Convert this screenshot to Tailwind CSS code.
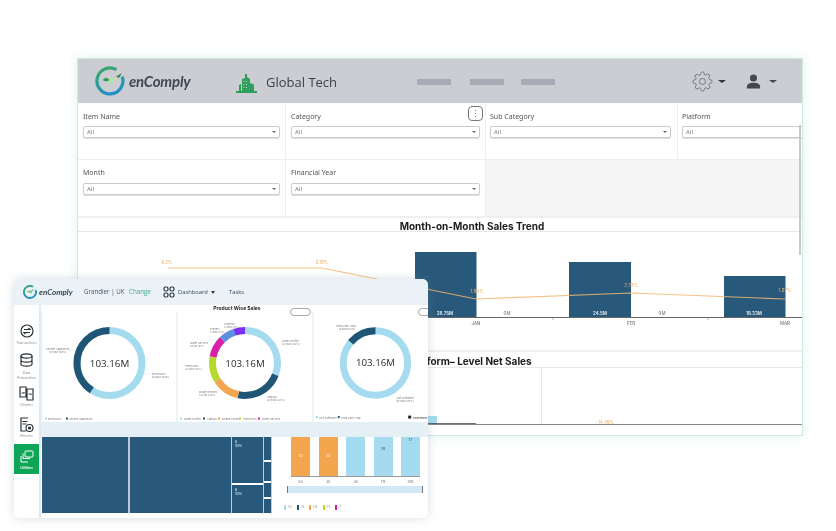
<!DOCTYPE html>
<html lang="en">
<head>
  <meta charset="UTF-8">
  <title>enComply</title>
  <script src="https://cdn.jsdelivr.net/npm/@tailwindcss/browser@4"></script>
</head>
<body class="bg-white font-['Inter',sans-serif] text-[#333]">
<div class="relative w-[836px] h-[531px] overflow-hidden bg-white blur-[0.35px]">

  <!-- back window -->
  <div class="absolute left-[77px] top-[58px] w-[726px] h-[378px] bg-white border border-[#cfe9e3] shadow-[0_0_10px_rgba(140,220,200,0.3)] flex flex-col overflow-hidden">
    <header class="h-[44px] shrink-0 bg-[#cccdd2] flex items-center">
      <svg class="ml-[17px] w-[30px] h-[30px]" viewBox="0 0 30 30" fill="none">
        <defs><linearGradient id="ring" x1="0.2" y1="0" x2="0.6" y2="1"><stop offset="0" stop-color="#3aa76d"/><stop offset="1" stop-color="#1f8fc9"/></linearGradient></defs>
        <path d="M21.500 3.700A13 13 0 1 0 27.200 10.600" stroke="url(#ring)" stroke-width="3.200"/>
        <path d="M11 14l4.500 4.500L26 7.500l-8.500 5.500-1.500-1z" fill="#b5e2a8"/>
        <path d="M7.500 14l3.500-2.500 4 2.500-4 1.500z" fill="#2f9a58"/>
        <path d="M21 10.500l6-3.500-3 5z" fill="#2f7f58"/>
      </svg>
      <span class="ml-[4px] w-[62px] font-['Lato',sans-serif] italic font-bold text-[15px] text-[#3d4a55] tracking-[-0.2px]">enComply</span>
      <svg class="ml-[45px] mt-[2px] w-[21px] h-[22px]" viewBox="0 0 21 22" fill="#2ea05c">
        <path d="M6 20V8l3-1V3h2v3l3 2v12z"/>
        <path d="M14 20v-8l4 1.500V20zM3 20v-6l2-1v7zM0 20h21v2H0z"/>
        <path d="M7.500 10h1v1h-1zM10 10h1v1h-1zM7.500 13h1v1h-1zM10 13h1v1h-1zM7.500 16h1v1h-1zM10 16h1v1h-1z" fill="#cccdd2"/>
      </svg>
      <span class="ml-[9px] mt-[4px] w-[71px] whitespace-nowrap text-[13px] text-[#3a3f45] font-['Open_Sans',sans-serif]">Global Tech</span>
      <div class="ml-[80px] mt-[2px] w-[34px] h-[6px] bg-[#a9aab5]"></div>
      <div class="ml-[19px] mt-[2px] w-[34px] h-[6px] bg-[#a9aab5]"></div>
      <div class="ml-[17px] mt-[2px] w-[34px] h-[6px] bg-[#a9aab5]"></div>
      <svg class="ml-[137px] w-[21px] h-[21px]" viewBox="0 0 24 24" fill="none" stroke="#5f6268" stroke-width=".9">
        <circle cx="12" cy="12" r="3.500"/>
        <path d="M19.400 15a1.650 1.650 0 0 0 .33 1.820l.06.06a2 2 0 1 1-2.830 2.830l-.06-.06a1.650 1.650 0 0 0-2.800 1.170V21a2 2 0 1 1-4 0v-.09a1.650 1.650 0 0 0-2.880-1.110l-.06.06a2 2 0 1 1-2.830-2.830l.06-.06a1.650 1.650 0 0 0-1.170-2.800H3a2 2 0 1 1 0-4h.09a1.650 1.650 0 0 0 1.110-2.880l-.06-.06a2 2 0 1 1 2.830-2.830l.06.06a1.650 1.650 0 0 0 1.820.33H9a1.650 1.650 0 0 0 1-1.510V3a2 2 0 1 1 4 0v.09a1.650 1.650 0 0 0 2.800 1.170l.06-.06a2 2 0 1 1 2.830 2.830l-.06.06a1.650 1.650 0 0 0-.33 1.820V9a1.650 1.650 0 0 0 1.510 1H21a2 2 0 1 1 0 4h-.09a1.650 1.650 0 0 0-1.510 1z"/>
      </svg>
      <div class="ml-[5px] w-0 h-0 border-x-[4px] border-x-transparent border-t-[3.500px] border-t-[#2f3238]"></div>
      <svg class="ml-[20px] w-[15px] h-[15px]" viewBox="0 0 17 16" fill="#44474d">
        <circle cx="8.500" cy="4" r="4"/>
        <path d="M1 16v-2c0-3 3-4.500 7.500-4.500S16 11 16 14v2z"/>
      </svg>
      <div class="ml-[8px] w-0 h-0 border-x-[4px] border-x-transparent border-t-[3.500px] border-t-[#44474d]"></div>
    </header>

    <!-- filters -->
    <div class="grid grid-cols-[208px_200px_192px_124px] grid-rows-[57px_56px] shrink-0 border-b-2 border-[#efefef] text-[7px] text-[#555] font-['Noto_Sans',sans-serif]">
      <div class="border-r border-b border-[#eee] pl-[5px] pr-[5px] pt-[9px]">
        <p class="leading-[10px]">Item Name</p>
        <div class="mt-[4px] h-[12px] rounded-[2px] border border-[#ccc] shadow-[0_1px_1px_#ddd] flex items-center justify-between px-[3px] text-[6px] text-[#777]"><span>All</span><i class="w-0 h-0 border-x-[2px] border-x-transparent border-t-[2px] border-t-[#666]"></i></div>
      </div>
      <div class="relative border-r border-b border-[#eee] pl-[5px] pr-[5px] pt-[9px]">
        <p class="leading-[10px]">Category</p>
        <div class="mt-[4px] h-[12px] rounded-[2px] border border-[#ccc] shadow-[0_1px_1px_#ddd] flex items-center justify-between px-[3px] text-[6px] text-[#777]"><span>All</span><i class="w-0 h-0 border-x-[2px] border-x-transparent border-t-[2px] border-t-[#666]"></i></div>
        <div class="absolute right-[2px] top-[3px] w-[15px] h-[15px] rounded-[4px] border border-[#777] bg-white flex flex-col items-center justify-center gap-[1.5px]"><i class="w-[1.5px] h-[1.5px] bg-[#555] rounded-full"></i><i class="w-[1.5px] h-[1.5px] bg-[#555] rounded-full"></i><i class="w-[1.5px] h-[1.5px] bg-[#555] rounded-full"></i></div>
      </div>
      <div class="border-r border-b border-[#eee] pl-[4px] pr-[6px] pt-[9px]">
        <p class="leading-[10px]">Sub Category</p>
        <div class="mt-[4px] h-[12px] rounded-[2px] border border-[#ccc] shadow-[0_1px_1px_#ddd] flex items-center justify-between px-[3px] text-[6px] text-[#777]"><span>All</span><i class="w-0 h-0 border-x-[2px] border-x-transparent border-t-[2px] border-t-[#666]"></i></div>
      </div>
      <div class="border-b border-[#eee] pl-[4px] pt-[9px]">
        <p class="leading-[10px]">Platform</p>
        <div class="mt-[4px] h-[12px] rounded-l-[2px] border border-r-0 border-[#ccc] shadow-[0_1px_1px_#ddd] flex items-center px-[3px] text-[6px] text-[#777]"><span>All</span></div>
      </div>
      <div class="border-r border-[#eee] pl-[5px] pr-[5px] pt-[8px]">
        <p class="leading-[10px]">Month</p>
        <div class="mt-[5px] h-[12px] rounded-[2px] border border-[#ccc] shadow-[0_1px_1px_#ddd] flex items-center justify-between px-[3px] text-[6px] text-[#777]"><span>All</span><i class="w-0 h-0 border-x-[2px] border-x-transparent border-t-[2px] border-t-[#666]"></i></div>
      </div>
      <div class="border-r border-[#eee] pl-[5px] pr-[5px] pt-[8px]">
        <p class="leading-[10px]">Financial Year</p>
        <div class="mt-[5px] h-[12px] rounded-[2px] border border-[#ccc] shadow-[0_1px_1px_#ddd] flex items-center justify-between px-[3px] text-[6px] text-[#777]"><span>All</span><i class="w-0 h-0 border-x-[2px] border-x-transparent border-t-[2px] border-t-[#666]"></i></div>
      </div>
      <div class="col-span-2 bg-[#f5f5f5]"></div>
    </div>

    <!-- sales trend -->
    <section class="h-[134px] shrink-0 flex flex-col border-b-2 border-[#efefef]">
      <h2 class="h-[14px] shrink-0 border-b border-[#e8e8e8] text-center text-[10px] font-bold leading-[16px] text-[#1c1c1c] pl-[64px]">Month-on-Month Sales Trend</h2>
      <svg class="w-[724px] h-[118px] shrink-0" viewBox="78 232 724 118" font-family="Inter, sans-serif">
        <rect x="415" y="252" width="61.500" height="65.500" fill="#29597a"/>
        <rect x="569" y="262" width="62" height="55.500" fill="#29597a"/>
        <rect x="724" y="276" width="61.500" height="41.500" fill="#29597a"/>
        <line x1="78" y1="317.500" x2="802" y2="317.500" stroke="#666" stroke-width="1"/>
        <path d="M553 318v2M708 318v2" stroke="#888" stroke-width=".6"/>
        <polyline points="168,268 322,268 476,299 631,293 785,299" fill="none" stroke="#f3b872" stroke-width="1.200" stroke-opacity=".85"/>
        <g font-size="4.500" fill="#f0ae5f" text-anchor="middle">
          <text x="167" y="264">6.2%</text><text x="322" y="264">6.19%</text>
          <text x="477" y="293">1.94%</text><text x="631" y="287">2.73%</text><text x="785" y="292">1.87%</text>
        </g>
        <g font-size="4.500" fill="#e8eef2" text-anchor="middle" font-weight="600">
          <text x="445" y="315">28.75M</text><text x="600" y="315">24.5M</text><text x="754" y="315">18.33M</text>
        </g>
        <g font-size="4.500" fill="#666" text-anchor="middle">
          <text x="507" y="315">0M</text><text x="662" y="315">0M</text>
          <text x="476" y="325">JAN</text><text x="631" y="325">FEB</text><text x="785" y="325">MAR</text>
        </g>
      </svg>
    </section>

    <!-- platform sales -->
    <section class="flex-1 flex flex-col">
      <h2 class="h-[16px] shrink-0 border-b border-[#e8e8e8] text-center text-[10px] font-bold leading-[18px] text-[#1c1c1c] pl-[60px]">Platform– Level Net Sales</h2>
      <svg class="w-[724px] h-[65px] shrink-0" viewBox="78 369 724 65" font-family="Inter, sans-serif">
        <line x1="541.500" y1="369" x2="541.500" y2="425" stroke="#e3e3e3" stroke-width=".8"/>
        <rect x="428" y="417" width="9" height="8" fill="#a5dbee"/>
        <line x1="78" y1="425.500" x2="802" y2="425.500" stroke="#888" stroke-width="1"/>
        <line x1="428" y1="424.500" x2="476" y2="424.500" stroke="#333" stroke-width=".7"/>
        <text x="605" y="425" font-size="4.500" fill="#f0ae5f" text-anchor="middle">-14.49%</text>
      </svg>
    </section>

    <div class="absolute right-[1px] top-[66px] w-[2px] h-[130px] bg-[#c9c9c9]"></div>
  </div>

  <!-- front window -->
  <div class="absolute left-[14px] top-[279px] w-[414px] h-[239px] rounded-[6px] bg-white shadow-[0_0_10px_rgba(120,140,160,0.3)] flex flex-col overflow-hidden">
    <header class="h-[26px] shrink-0 bg-[#eaf2f7] flex items-center whitespace-nowrap">
      <svg class="ml-[9px] w-[14px] h-[14px] shrink-0" viewBox="0 0 30 30" fill="none">
        <path d="M21.500 3.700A13 13 0 1 0 27.200 10.600" stroke="url(#ring)" stroke-width="4"/>
        <path d="M8 14l5-3 3 2 9-6-8 11z" fill="#7cc68c"/>
      </svg>
      <span class="ml-[2px] w-[34px] font-['Lato',sans-serif] italic font-bold text-[8px] text-[#3a4752]">enComply</span>
      <span class="ml-[11px] w-[38px] font-['Open_Sans',sans-serif] text-[6.200px] text-[#4b5660]">Grandier | UK</span>
      <span class="ml-[7px] w-[21px] font-['Open_Sans',sans-serif] text-[6.200px] text-[#3fa98a]">Change</span>
      <svg class="ml-[13px] w-[12px] h-[12px] shrink-0" viewBox="0 0 12 12" fill="none" stroke="#2f3841" stroke-width="1.200">
        <rect x="1" y="1" width="4" height="4" rx="1.500"/><rect x="7" y="1" width="4" height="4" rx="1.500"/>
        <rect x="1" y="7" width="4" height="4" rx="1.500"/><rect x="7" y="7" width="4" height="4" rx="1.500"/>
      </svg>
      <span class="ml-[3px] w-[29px] font-['Open_Sans',sans-serif] text-[5.800px] text-[#3a4752]">Dashboard</span>
      <i class="ml-[4px] w-0 h-0 border-x-[2.500px] border-x-transparent border-t-[3px] border-t-[#333]"></i>
      <span class="ml-[14px] font-['Open_Sans',sans-serif] text-[5.800px] text-[#3a4752]">Tasks</span>
    </header>

    <div class="flex-1 flex min-h-0">
      <!-- sidebar -->
      <aside class="w-[25px] shrink-0 bg-white border-r-[2px] border-[#dfe9f0] box-content flex flex-col items-center text-[3.500px] text-[#8a8f95] leading-[5px] text-center">
        <svg class="mt-[19px] w-[14px] h-[14px]" viewBox="0 0 14 14" fill="none" stroke="#2c3338" stroke-width="1.200">
          <circle cx="7" cy="7" r="6"/><path d="M4 5.500h6l-1.500-1.500M10 8.500H4l1.500 1.500"/>
        </svg>
        <span class="mt-[3px]">Transactions</span>
        <svg class="mt-[7px] w-[13px] h-[14px]" viewBox="0 0 13 14" fill="none" stroke="#2c3338" stroke-width="1.200">
          <ellipse cx="6.500" cy="3" rx="5.500" ry="2.200"/><path d="M1 3v8c0 1.200 2.500 2.200 5.500 2.200S12 12.200 12 11V3M1 7c0 1.200 2.500 2.200 5.500 2.200S12 8.200 12 7"/>
        </svg>
        <span class="mt-[4px]">Data<br>Preparation</span>
        <svg class="mt-[5px] w-[15px] h-[15px]" viewBox="0 0 15 15" fill="none" stroke="#2c3338" stroke-width="1.200">
          <path d="M1 1h6v10H1zM8 3h6v11H8z"/><path d="M2.500 7h3l-1-1M9.500 8h3l-1 1" stroke-width=".9"/>
        </svg>
        <span class="mt-[2px]">Citizens</span>
        <svg class="mt-[9px] w-[15px] h-[16px]" viewBox="0 0 15 16" fill="none" stroke="#2c3338" stroke-width="1.200">
          <path d="M9 1H2v13h5M3.500 4.500h5M3.500 7h4"/><circle cx="10.500" cy="11" r="3.500"/><circle cx="10.500" cy="11" r="1" fill="#2c3338"/>
        </svg>
        <span class="mt-[1px]">Returns</span>
        <div class="mt-[5px] w-[25px] h-[30px] bg-[#0ea558] flex flex-col items-center text-white font-semibold">
          <svg class="mt-[6px] w-[14px] h-[13px]" viewBox="0 0 14 13" fill="none" stroke="#fff" stroke-width="1">
            <rect x="5" y="1" width="8" height="6" rx="1"/><path d="M3 3.500v5h7M1 6v6h7"/>
          </svg>
          <span class="mt-[3px]">Utilities</span>
        </div>
      </aside>

      <main class="flex-1 min-w-0 flex flex-col bg-white">
        <!-- title row -->
        <div class="h-[7px] shrink-0 relative z-10 text-center text-[5px] font-bold leading-[7px] text-[#222]">
          <span class="ml-[5px]">Product Wise Sales</span>
          <div class="absolute left-[249px] top-[3px] w-[21px] h-[8px] rounded-[4px] border border-[#aaa] bg-white"></div>
          <div class="absolute right-[-4px] top-[3px] w-[14px] h-[8px] rounded-[4px] border border-[#aaa] bg-white"></div>
        </div>

        <!-- donut panels -->
        <div class="h-[110px] shrink-0 flex gap-[2px] pl-[2px] bg-[#f0f5f8]">
          <div class="w-[133px] bg-white">
            <svg class="w-full h-full" viewBox="0 0 133 110" font-family="Inter, sans-serif">
              <g transform="rotate(-90 66.500 51)" fill="none" stroke-width="7">
                <circle cx="66.500" cy="51" r="32.500" stroke="#a5dbee"/>
                <circle cx="66.500" cy="51" r="32.500" pathLength="360" stroke="#1f5675" stroke-dasharray="147 360" stroke-dashoffset="-213"/>
              </g>
              <text x="66.500" y="54.500" font-size="9.800" text-anchor="middle" fill="#2b2b2b" font-family="Open Sans, sans-serif">103.16M</text>
              <g font-size="2.600" fill="#777">
                <text x="3" y="38">Kitchen Appliances</text><text x="6" y="41">41.50M (40%)</text>
                <text x="109" y="63">Electronics</text><text x="109" y="66">61.66M (60%)</text>
                <text x="5" y="108">Electronics</text><text x="26" y="108">Kitchen Appliances</text>
              </g>
              <path d="M25 38h9M99 62h8" stroke="#bbb" stroke-width=".3"/>
              <rect x="2" y="105.500" width="2" height="2" fill="#a5dbee"/><rect x="23" y="105.500" width="2" height="2" fill="#1f5675"/>
            </svg>
          </div>
          <div class="w-[134px] bg-white">
            <svg class="w-full h-full" viewBox="0 0 134 110" font-family="Inter, sans-serif">
              <g transform="rotate(-90 67 51)" fill="none" stroke-width="7">
                <circle cx="67" cy="51" r="32.500" pathLength="360" stroke="#a5dbee" stroke-dasharray="111 360"/>
                <circle cx="67" cy="51" r="32.500" pathLength="360" stroke="#1f5675" stroke-dasharray="81 360" stroke-dashoffset="-111"/>
                <circle cx="67" cy="51" r="32.500" pathLength="360" stroke="#f4a64e" stroke-dasharray="46 360" stroke-dashoffset="-192"/>
                <circle cx="67" cy="51" r="32.500" pathLength="360" stroke="#b5d92f" stroke-dasharray="43 360" stroke-dashoffset="-238"/>
                <circle cx="67" cy="51" r="32.500" pathLength="360" stroke="#d81fa8" stroke-dasharray="35 360" stroke-dashoffset="-281"/>
                <circle cx="67" cy="51" r="32.500" pathLength="360" stroke="#5c8fe0" stroke-dasharray="25 360" stroke-dashoffset="-316"/>
                <circle cx="67" cy="51" r="32.500" pathLength="360" stroke="#7c2ff0" stroke-dasharray="19 360" stroke-dashoffset="-341"/>
              </g>
              <text x="67" y="54.500" font-size="9.800" text-anchor="middle" fill="#2b2b2b" font-family="Open Sans, sans-serif">103.16M</text>
              <g font-size="2.600" fill="#777">
                <text x="104" y="30">Water Purifier</text><text x="104" y="33">32.76M (32%)</text>
                <text x="89" y="86">Laptops</text><text x="89" y="89">23.85M (23%)</text>
                <text x="21" y="81">Mobile Phones</text><text x="21" y="84">14.13M (14%)</text>
                <text x="7" y="55">Televisions</text><text x="7" y="58">12.68M (12%)</text>
                <text x="12" y="32">Water Geysers</text><text x="12" y="35">9.12M (9%)</text>
                <text x="32" y="18">Printers</text><text x="32" y="21">7.28M (7%)</text>
                <text x="46" y="13">Cameras</text><text x="46" y="16">3.34M (3%)</text>
              </g>
              <g font-size="2.600" fill="#777">
                <text x="6" y="108">Water Purifier</text><text x="29" y="108">Laptops</text><text x="44" y="108">Mobile Phones</text><text x="65" y="108">Televisions</text><text x="84" y="108">Water Geysers</text>
              </g>
              <rect x="2" y="105.500" width="2" height="2" fill="#a5dbee"/><rect x="25" y="105.500" width="2" height="2" fill="#1f5675"/><rect x="40" y="105.500" width="2" height="2" fill="#f4a64e"/><rect x="61" y="105.500" width="2" height="2" fill="#b5d92f"/><rect x="80" y="105.500" width="2" height="2" fill="#d81fa8"/>
            </svg>
          </div>
          <div class="flex-1 bg-white">
            <svg class="w-full h-full" viewBox="0 0 115 110" font-family="Inter, sans-serif">
              <g transform="rotate(-90 62 51)" fill="none" stroke-width="7">
                <circle cx="62" cy="51" r="32.500" stroke="#a5dbee"/>
                <circle cx="62" cy="51" r="32.500" pathLength="360" stroke="#1f5675" stroke-dasharray="50 360" stroke-dashoffset="-310"/>
              </g>
              <text x="62" y="54.500" font-size="9.800" text-anchor="middle" fill="#2b2b2b" font-family="Open Sans, sans-serif">103.16M</text>
              <g font-size="2.600" fill="#777">
                <text x="22" y="15">Third-Party Ship</text><text x="25" y="18">13.60M (13%)</text>
                <text x="83" y="87">Self-Fulfilment</text><text x="83" y="90">89.56M (87%)</text>
                <text x="5" y="107">Self-Fulfilment</text><text x="27" y="107">Third-Party Ship</text>
                <text x="100" y="107" fill="#222">Powered by</text>
              </g>
              <rect x="2" y="104.500" width="2" height="2" fill="#a5dbee"/><rect x="24" y="104.500" width="2" height="2" fill="#1f5675"/><rect x="95" y="104" width="3" height="3" fill="#222"/>
            </svg>
          </div>
        </div>

        <div class="h-[15px] shrink-0 bg-[#e4eff6]"></div>

        <!-- treemap + bars -->
        <div class="h-[76px] shrink-0 flex">
          <div class="ml-[1px] w-[230px] flex gap-[1px] bg-[#b9cbd6]">
            <div class="w-[86px] bg-[#29597a]"></div>
            <div class="ml-[1px] w-[101px] bg-[#29597a]"></div>
            <div class="w-[31px] flex flex-col gap-[2px] bg-white text-[3.500px] leading-[4px] text-white">
              <div class="h-[46px] bg-[#29597a] pl-[3px] pt-[3px]">8<br>10%</div>
              <div class="flex-1 bg-[#29597a] pl-[3px] pt-[3px]">6<br>10%</div>
            </div>
            <div class="w-[7px] flex flex-col gap-[2px] bg-white">
              <div class="h-[23px] bg-[#29597a]"></div>
              <div class="h-[19px] bg-[#29597a]"></div>
              <div class="h-[14px] bg-[#29597a]"></div>
              <div class="h-[14px] bg-[#29597a]"></div>
            </div>
          </div>
          <div class="flex-1 pl-[15px]">
            <div class="ml-[4px] h-[40px] flex gap-[8.500px] border-b border-[#999] w-[129px] text-[4px] text-white text-center">
              <div class="w-[19px] bg-[#f4a64e] pt-[16px]">13</div>
              <div class="w-[19px] bg-[#f4a64e] pt-[16px]">13</div>
              <div class="w-[19px] bg-[#a5dbee]"></div>
              <div class="w-[19px] bg-[#a5dbee] pt-[9px] text-[#2c4a5e]">14</div>
              <div class="w-[19px] bg-[#a5dbee] text-[#2c4a5e]">17</div>
            </div>
            <div class="ml-[4px] mt-[3px] w-[129px] flex gap-[8.500px] text-[3.500px] leading-[5px] text-center text-[#666]">
              <span class="w-[19px]">S3</span><span class="w-[19px]">J5</span><span class="w-[19px]">J8</span><span class="w-[19px]">T9</span><span class="w-[19px]">S10</span>
            </div>
            <div class="mt-[1px] w-[136px] h-[7px] bg-[#d2e8f6] border-x border-[#777]"></div>
            <div class="mt-[12px] ml-[-3px] flex items-center gap-[2px] text-[3px] text-[#888]">
              <i class="w-[2px] h-[5px] bg-[#a5dbee]"></i><span class="mr-[3px]">S3</span>
              <i class="w-[2px] h-[5px] bg-[#1f5675]"></i><span class="mr-[3px]">J5</span>
              <i class="w-[2px] h-[5px] bg-[#f4a64e]"></i><span class="mr-[3px]">H4</span>
              <i class="w-[2px] h-[5px] bg-[#b5d92f]"></i><span class="mr-[3px]">T5</span>
              <i class="w-[2px] h-[5px] bg-[#d81fa8]"></i><span>T</span>
            </div>
          </div>
        </div>
      </main>
    </div>
  </div>
</div>
</body>
</html>
